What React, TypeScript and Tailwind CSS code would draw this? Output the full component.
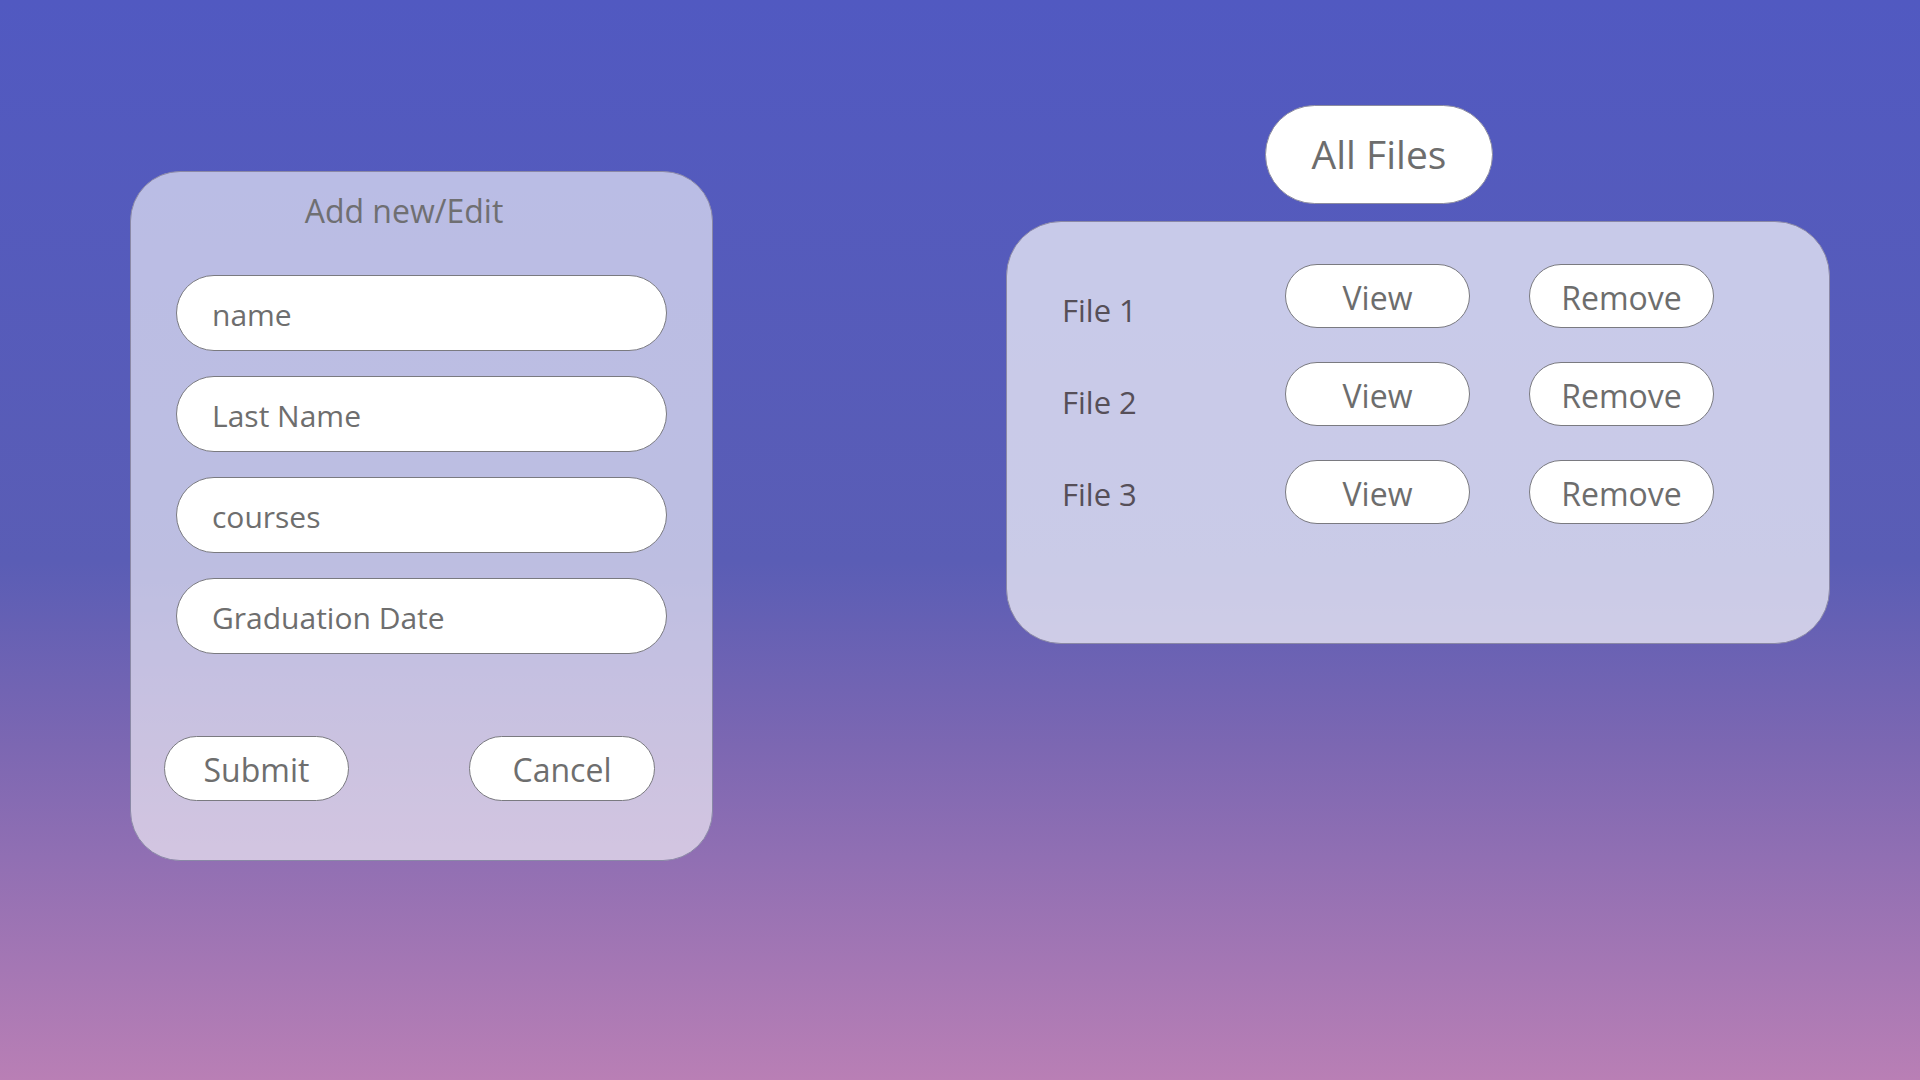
import React from 'react';

const fields = ['name', 'Last Name', 'courses', 'Graduation Date'];
const files = ['File 1', 'File 2', 'File 3'];

export default function App() {
    return (
        <div
            className="min-h-screen w-full flex items-start pl-[130px] bg-[linear-gradient(180deg,#5159c1_0%,#5a5db5_52%,#7c67b2_69%,#b97fb5_100%)]"
            style={{ fontFamily: '"Open Sans", "Noto Sans", sans-serif' }}
        >
            {/* Add / edit form */}
            <div className="mt-[171px] w-[583px] h-[690px] rounded-[50px] border border-[#8a88a6] bg-white/60 flex flex-col">
                <div className="pt-[15px] pr-[35px] text-center text-[32px] text-[#6f6f72] leading-normal">
                    Add new/Edit
                </div>
                <div className="mt-[40px] px-[45px] flex flex-col gap-[25px]">
                    {fields.map((f) => (
                        <div
                            key={f}
                            className="h-[76px] rounded-full border border-[#7a7a80] bg-white flex items-center pl-[35px] pt-[3px] text-[30px] text-[#6e6e6e]"
                        >
                            {f}
                        </div>
                    ))}
                </div>
                <div className="mt-[82px] pl-[33px] flex">
                    <button className="w-[185px] h-[65px] pt-[3px] rounded-full border border-[#7a7a80] bg-white text-[32px] text-[#6e6e6e]">
                        Submit
                    </button>
                    <button className="ml-[120px] w-[186px] h-[65px] pt-[3px] rounded-full border border-[#7a7a80] bg-white text-[32px] text-[#6e6e6e]">
                        Cancel
                    </button>
                </div>
            </div>

            {/* Files list */}
            <div className="ml-[293px] mt-[105px] flex flex-col">
                <div className="ml-[259px] w-[228px] h-[99px] rounded-full border border-[#8c8ca0] bg-white flex items-center justify-center text-[39px] text-[#6d6d6d]">
                    All Files
                </div>
                <div className="mt-[17px] w-[824px] h-[423px] rounded-[55px] border border-[#8a88a6] bg-white/68 flex">
                    <div className="w-[278px] pl-[55px] pt-[42px] flex flex-col text-[31px] leading-[92px] text-[#564f58]">
                        {files.map((f) => (
                            <div key={f}>{f}</div>
                        ))}
                    </div>
                    <div className="pt-[42px] flex flex-col gap-[34px]">
                        {files.map((f) => (
                            <div key={f} className="flex gap-[59px]">
                                <button className="w-[185px] h-[64px] pt-[4px] rounded-full border border-[#7a7a80] bg-white text-[32px] text-[#6d6d6d]">
                                    View
                                </button>
                                <button className="w-[185px] h-[64px] pt-[4px] rounded-full border border-[#7a7a80] bg-white text-[32px] text-[#6d6d6d]">
                                    Remove
                                </button>
                            </div>
                        ))}
                    </div>
                </div>
            </div>
        </div>
    );
}
